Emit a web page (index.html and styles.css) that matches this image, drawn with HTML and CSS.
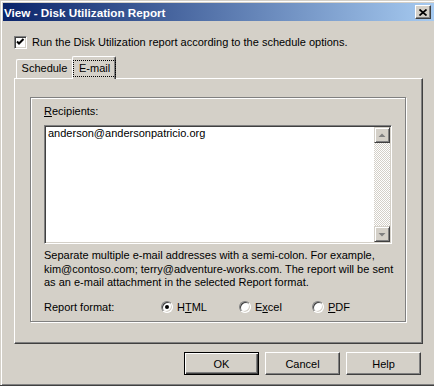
FILE: index.html
```html
<!DOCTYPE html>
<html lang="en">
<head>
<meta charset="UTF-8">
<meta name="viewport" content="width=device-width, initial-scale=1.0">
<title>View - Disk Utilization Report</title>
<link rel="stylesheet" href="styles.css">
</head>
<body>
<div class="window">
    <div class="titlebar">
        <span class="title">View - Disk Utilization Report</span>
        <span class="close-btn">
            <svg width="8" height="7" viewBox="0 0 8 7"><path d="M0.5 0.5l7 6M7.5 0.5l-7 6" stroke="#000" stroke-width="1.7" fill="none"/></svg>
        </span>
    </div>
    <div class="content">
        <div class="check-row">
            <span class="checkbox">
                <svg width="9" height="9" viewBox="0 0 9 9"><path d="M1 3.5l2 2l4.5-4.5" stroke="#000" stroke-width="2" fill="none"/></svg>
            </span>
            <span>Run the Disk Utilization report according to the schedule options.</span>
        </div>

        <!-- tabs -->
        <div class="tabs">
            <div class="tab">Schedule</div>
            <div class="tab active"><span class="focus">E-mail</span></div>
        </div>
        <div class="tab-panel">
            <div class="group">
                <div class="field-label"><u>R</u>ecipients:</div>
                <div class="listbox">
                    <div class="list-text">anderson@andersonpatricio.org</div>
                    <div class="scrollbar">
                        <span class="scroll-btn">
                            <svg width="8" height="5" viewBox="0 0 8 5"><path d="M4 0.5L7.5 4H0.5z" fill="#808080"/></svg>
                        </span>
                        <span class="scroll-track"></span>
                        <span class="scroll-btn">
                            <svg width="8" height="5" viewBox="0 0 8 5"><path d="M0.5 1H7.5L4 4.5z" fill="#808080"/></svg>
                        </span>
                    </div>
                </div>
                <p class="hint">Separate multiple e-mail addresses with a semi-colon. For example,<br>kim@contoso.com; terry@adventure-works.com. The report will be sent<br>as an e-mail attachment in the selected Report format.</p>
                <div class="format-row">
                    <span class="format-label">Report format:</span>
                    <span class="option wide"><span class="radio checked"></span><span>H<u>T</u>ML</span></span>
                    <span class="option mid"><span class="radio"></span><span>E<u>x</u>cel</span></span>
                    <span class="option"><span class="radio"></span><span><u>P</u>DF</span></span>
                </div>
            </div>
        </div>

        <div class="buttons">
            <button class="btn default">OK</button>
            <button class="btn">Cancel</button>
            <button class="btn">Help</button>
        </div>
    </div>
</div>
<div class="behind">
    <svg width="434" height="2"><path d="M20.5 0v2M43.5 0v2M48.5 0v2M123.5 0v2M192.5 0v2M286.5 0v2M295.5 0v2" stroke="#000"/></svg>
</div>
</body>
</html>
```

FILE: styles.css
```css
body {
    margin: 0;
    width: 434px;
    height: 388px;
    overflow: hidden;
    background: #fff;
    font-family: "Liberation Sans", Arial, sans-serif;
    font-size: 11px;
    color: #000;
}

.window {
    box-sizing: border-box;
    height: 386px;
    padding: 3px 0 0 3px;
    background: #d4d0c8;
    border-bottom: 1px solid #404040;
    box-shadow: inset 1px 1px 0 #d4d0c8, inset 2px 2px 0 #fff, inset 0 -1px 0 #808080;
}

.titlebar {
    display: flex;
    align-items: center;
    justify-content: space-between;
    height: 18px;
    padding-left: 1px;
    background: linear-gradient(to right, #0a246a, #a6caf0);
}

.title {
    color: #fff;
    font-weight: bold;
    font-size: 11.7px;
}

.close-btn {
    display: flex;
    align-items: center;
    justify-content: center;
    box-sizing: border-box;
    width: 16px;
    height: 14px;
    margin-right: 3px;
    background: #d4d0c8;
    border: 1px solid;
    border-color: #fff #404040 #404040 #fff;
    box-shadow: inset -1px -1px 0 #808080;
}

.check-row {
    display: flex;
    align-items: center;
    gap: 5px;
    height: 13px;
    line-height: 13px;
    margin: 15px 0 0 11px;
}

.checkbox {
    display: flex;
    align-items: center;
    justify-content: center;
    box-sizing: border-box;
    width: 13px;
    height: 13px;
    background: #fff;
    border: 1px solid;
    border-color: #808080 #fff #fff #808080;
    box-shadow: inset 1px 1px 0 #404040, inset -1px -1px 0 #d4d0c8;
}

.tabs {
    display: flex;
    align-items: flex-end;
    height: 22px;
    margin: 7px 0 0 11px;
    padding-left: 2px;
}

.tab {
    box-sizing: border-box;
    width: 56px;
    height: 19px;
    line-height: 17px;
    text-align: center;
    white-space: nowrap;
    border-top: 1px solid #fff;
    border-left: 1px solid #fff;
    border-radius: 2px 2px 0 0;
}

.tab.active {
    position: relative;
    z-index: 1;
    width: 44px;
    height: 23px;
    margin-bottom: -1px;
    padding-top: 3px;
    line-height: 13px;
    background: #d4d0c8;
    border-right: 1px solid #404040;
    box-shadow: inset -1px 0 0 #808080;
}

.focus {
    display: inline-block;
    padding: 1px 5px;
    border: 1px dotted #000;
}

.tab-panel {
    box-sizing: border-box;
    width: 409px;
    height: 266px;
    margin-left: 11px;
    padding: 18px 0 0 15px;
    border: 1px solid;
    border-color: #fff #404040 #404040 #fff;
    box-shadow: inset -1px -1px 0 #808080;
}

.group {
    box-sizing: border-box;
    width: 376px;
    height: 225px;
    padding: 7px 0 0 13px;
    border: 1px solid #808080;
    box-shadow: inset 1px 1px 0 #fff, 1px 1px 0 #fff;
}

.field-label {
    line-height: 13px;
}

.listbox {
    display: flex;
    box-sizing: border-box;
    width: 348px;
    height: 119px;
    margin-top: 7px;
    background: #fff;
    border: 1px solid;
    border-color: #808080 #fff #fff #808080;
    padding: 1px;
    box-shadow: inset 1px 1px 0 #404040, inset -1px -1px 0 #d4d0c8;
}

.list-text {
    flex: 1;
    padding-left: 2px;
    line-height: 13px;
}

.scrollbar {
    display: flex;
    flex-direction: column;
    width: 16px;
}

.scroll-btn {
    display: flex;
    align-items: center;
    justify-content: center;
    box-sizing: border-box;
    height: 16px;
    background: #d4d0c8;
    border: 1px solid;
    border-color: #d4d0c8 #404040 #404040 #d4d0c8;
    box-shadow: inset 1px 1px 0 #fff, inset -1px -1px 0 #808080;
}

.scroll-track {
    flex: 1;
    background: repeating-conic-gradient(#d4d0c8 0 25%, #fff 0 50%) 0 0 / 2px 2px;
}

.hint {
    margin: 5px 0 0;
    line-height: 13.5px;
    white-space: nowrap;
}

.format-row {
    display: flex;
    align-items: center;
    height: 13px;
    margin-top: 11px;
}

.format-label {
    width: 117px;
}

.option {
    display: flex;
    align-items: center;
    gap: 4px;
}

.option.wide {
    width: 78px;
}

.option.mid {
    width: 73px;
}

.radio {
    display: flex;
    align-items: center;
    justify-content: center;
    box-sizing: border-box;
    width: 12px;
    height: 12px;
    border-radius: 50%;
    background: #fff;
    border: 1px solid;
    border-color: #808080 #fff #fff #808080;
    box-shadow: inset 1px 1px 0 #404040, inset -1px -1px 0 #d4d0c8;
}

.radio.checked::after {
    content: "";
    width: 4px;
    height: 4px;
    border-radius: 50%;
    background: #000;
}

.buttons {
    display: flex;
    justify-content: flex-end;
    gap: 6px;
    margin-top: 8px;
    padding-right: 13px;
}

.btn {
    box-sizing: border-box;
    width: 75px;
    height: 23px;
    padding: 0;
    font-family: inherit;
    font-size: 11px;
    color: #000;
    background: #d4d0c8;
    border: 1px solid;
    border-color: #fff #404040 #404040 #fff;
    box-shadow: inset -1px -1px 0 #808080;
}

.btn.default {
    border-color: #000;
    box-shadow: inset 1px 1px 0 #fff, inset -1px -1px 0 #404040, inset -2px -2px 0 #808080;
}

.behind {
    height: 2px;
    line-height: 0;
}
```
